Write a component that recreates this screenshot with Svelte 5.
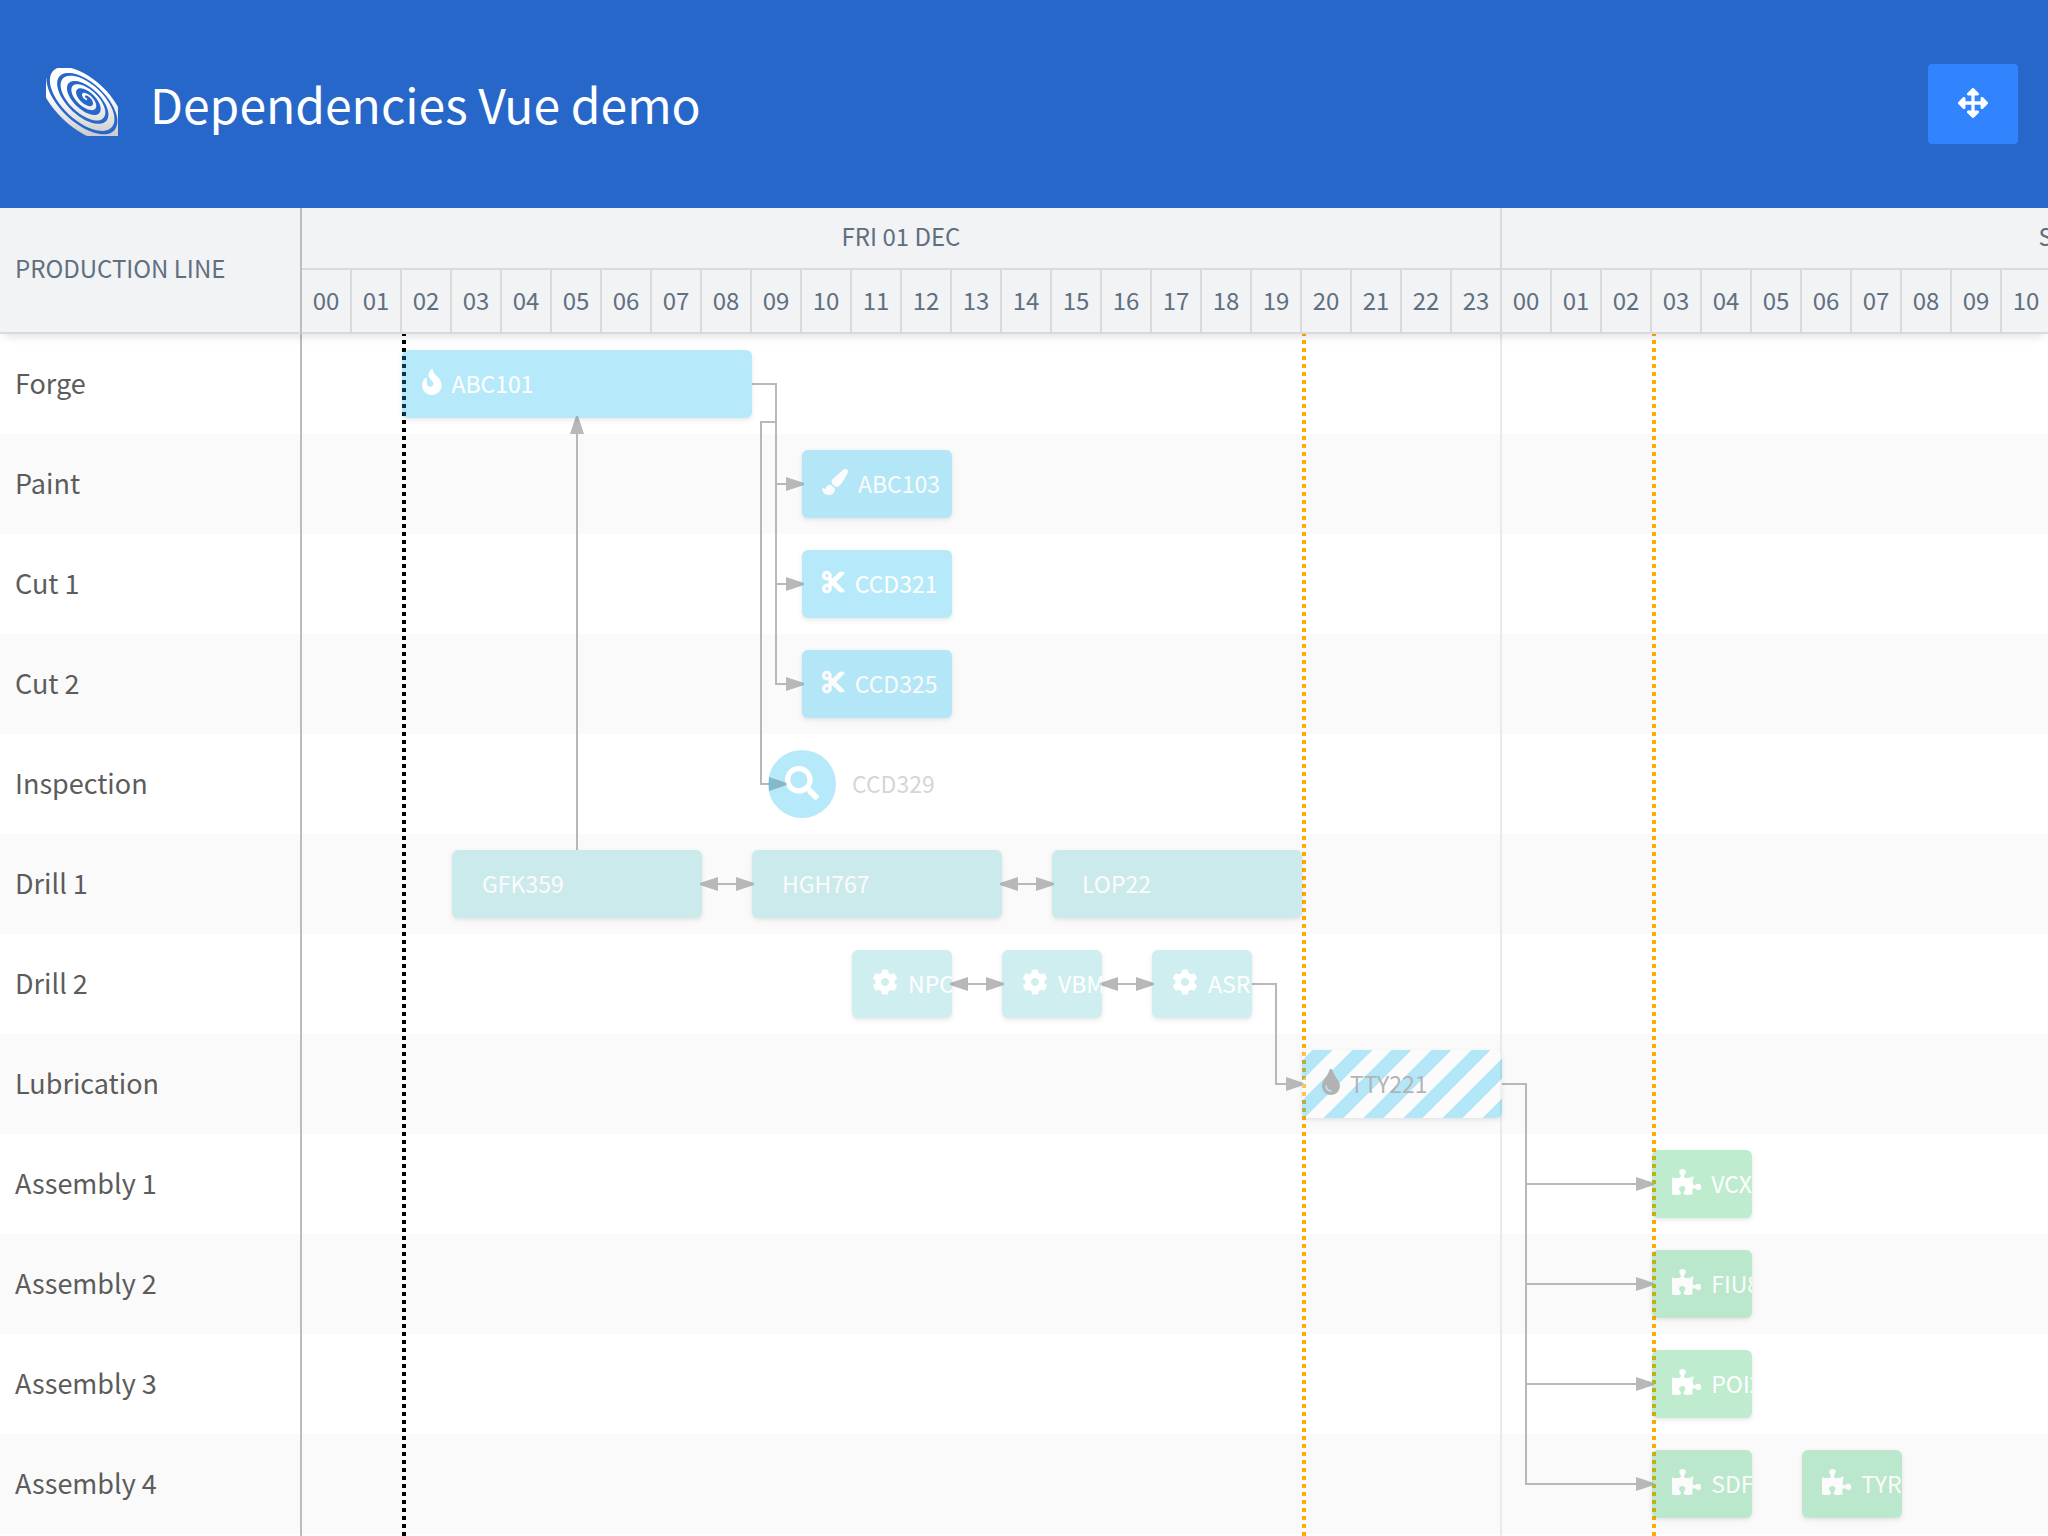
<script>
  const hourWidth = 50;
  const rowHeight = 100;
  const days = ['Fri 01 Dec', 'Sat 02 Dec'];
  const hours = Array.from({ length: 48 }, (_, i) => String(i % 24).padStart(2, '0'));

  const icons = {
    fire: { w: 384, d: 'M216 23.86c0-23.8-30.65-32.77-44.15-13.04C48 191.85 224 200 224 288c0 35.63-29.11 64.46-64.85 63.99-35.17-.45-63.15-29.77-63.15-64.94v-85.51c0-21.7-26.47-32.23-41.43-16.5C27.8 213.16 0 261.33 0 320c0 105.87 86.13 192 192 192s192-86.13 192-192c0-170.29-168-193-168-296.14z' },
    brush: { w: 512, d: 'M167.02 309.34c-40.12 2.58-76.53 17.86-97.19 72.3-2.35 6.21-8 9.98-14.59 9.98-11.11 0-45.46-27.67-55.25-34.35C0 439.62 37.93 512 128 512c75.86 0 128-43.77 128-120.19 0-3.11-.65-6.08-.97-9.13l-88.01-73.34zM457.89 0c-15.16 0-29.37 6.71-40.21 16.45C213.27 199.05 192 203.34 192 257.09c0 13.7 3.25 26.76 8.73 38.7l63.82 53.18c7.21 1.8 14.64 3.03 22.39 3.03 62.11 0 98.11-45.47 211.16-256.46 7.38-14.35 13.9-29.85 13.9-45.99C512 20.64 486 0 457.89 0z' },
    cut: { w: 448, d: 'M278.06 256L444.48 89.57c4.69-4.69 4.69-12.29 0-16.97-32.8-32.8-85.99-32.8-118.79 0L210.18 188.12l-24.86-24.86c4.31-10.92 6.68-22.81 6.68-35.26 0-53.02-42.98-96-96-96S0 74.98 0 128s42.98 96 96 96c4.54 0 8.99-.32 13.36-.93L142.29 256l-32.93 32.93c-4.37-.61-8.83-.93-13.36-.93-53.02 0-96 42.98-96 96s42.98 96 96 96 96-42.98 96-96c0-12.45-2.37-24.34-6.68-35.26l24.86-24.86L325.69 439.4c32.8 32.8 85.99 32.8 118.79 0 4.69-4.68 4.69-12.28 0-16.97L278.06 256zM96 160c-17.64 0-32-14.36-32-32s14.36-32 32-32 32 14.36 32 32-14.36 32-32 32zm0 256c-17.64 0-32-14.36-32-32s14.36-32 32-32 32 14.36 32 32-14.36 32-32 32z' },
    search: { w: 512, d: 'M505 442.7L405.3 343c-4.5-4.5-10.6-7-17-7H372c27.6-35.3 44-79.7 44-128C416 93.1 322.9 0 208 0S0 93.1 0 208s93.1 208 208 208c48.3 0 92.7-16.4 128-44v16.3c0 6.4 2.5 12.5 7 17l99.7 99.7c9.4 9.4 24.6 9.4 33.9 0l28.3-28.3c9.4-9.4 9.4-24.6.1-34zM208 336c-70.7 0-128-57.2-128-128 0-70.7 57.2-128 128-128 70.7 0 128 57.2 128 128 0 70.7-57.2 128-128 128z' },
    cog: { w: 512, d: 'M487.4 315.7l-42.6-24.6c4.3-23.2 4.3-47 0-70.2l42.6-24.6c4.9-2.8 7.1-8.6 5.5-14-11.1-35.6-30-67.8-54.7-94.6-3.8-4.1-10-5.1-14.8-2.3L380.8 110c-17.9-15.4-38.5-27.3-60.8-35.1V25.8c0-5.6-3.9-10.5-9.4-11.7-36.7-8.2-74.3-7.8-109.2 0-5.5 1.2-9.4 6.1-9.4 11.7V75c-22.2 7.9-42.8 19.8-60.8 35.1L88.7 85.5c-4.9-2.8-11-1.9-14.8 2.3-24.7 26.7-43.6 58.9-54.7 94.6-1.7 5.4.6 11.2 5.5 14L67.3 221c-4.3 23.2-4.3 47 0 70.2l-42.6 24.6c-4.9 2.8-7.1 8.6-5.5 14 11.1 35.6 30 67.8 54.7 94.6 3.8 4.1 10 5.1 14.8 2.3l42.6-24.6c17.9 15.4 38.5 27.3 60.8 35.1v49.2c0 5.6 3.9 10.5 9.4 11.7 36.7 8.2 74.3 7.8 109.2 0 5.5-1.2 9.4-6.1 9.4-11.7v-49.2c22.2-7.9 42.8-19.8 60.8-35.1l42.6 24.6c4.9 2.8 11 1.9 14.8-2.3 24.7-26.7 43.6-58.9 54.7-94.6 1.5-5.5-.7-11.3-5.6-14.1zM256 336c-44.1 0-80-35.9-80-80s35.9-80 80-80 80 35.9 80 80-35.9 80-80 80z' },
    tint: { w: 352, d: 'M205.22 22.09c-7.94-28.78-49.44-30.12-58.44 0C100.01 179.85 0 222.72 0 333.91 0 432.35 78.72 512 176 512s176-79.65 176-178.09c0-111.75-99.79-153.34-146.78-311.82zM176 448c-61.75 0-112-50.25-112-112 0-8.84 7.16-16 16-16s16 7.16 16 16c0 44.11 35.89 80 80 80 8.84 0 16 7.16 16 16s-7.16 16-16 16z' },
    puzzle: { w: 576, d: 'M519.442 288.651c-41.519 0-59.5 31.593-82.058 31.593C377.409 320.244 432 144 432 144s-196.288 80-196.288-3.297c0-35.827 36.288-46.25 36.288-85.985C272 19.216 243.885 0 210.539 0c-34.654 0-66.366 18.891-66.366 56.346 0 41.364 31.711 59.277 31.711 81.75C175.885 207.719 0 166.758 0 166.758v333.237s178.635 41.047 178.635-28.662c0-22.473-40-40.107-40-81.471 0-37.456 29.25-56.346 63.577-56.346 33.673 0 61.788 19.216 61.788 54.717 0 39.735-36.288 50.158-36.288 85.985 0 60.803 129.675 25.73 181.23 25.73 0 0-34.725-120.101 25.827-120.101 35.962 0 46.423 36.152 86.308 36.152C556.712 416 576 387.99 576 354.443c0-34.199-18.962-65.792-56.558-65.792z' },
    move: { w: 512, d: 'M352.201 425.775l-79.196 79.196c-9.373 9.373-24.568 9.373-33.941 0l-79.196-79.196c-15.119-15.119-4.411-40.971 16.971-40.97h51.162L228 284H127.196v51.162c0 21.382-25.851 32.09-40.971 16.971L7.029 272.937c-9.373-9.373-9.373-24.569 0-33.941L86.225 159.8c15.119-15.119 40.971-4.411 40.971 16.971V228H228V127.196h-51.23c-21.382 0-32.09-25.851-16.971-40.971l79.196-79.196c9.373-9.373 24.568-9.373 33.941 0l79.196 79.196c15.119 15.119 4.411 40.971-16.971 40.971h-51.162V228h100.804v-51.162c0-21.382 25.851-32.09 40.97-16.971l79.196 79.196c9.373 9.373 9.373 24.569 0 33.941L425.773 352.2c-15.119 15.119-40.971 4.411-40.97-16.971V284H284v100.804h51.23c21.382 0 32.09 25.851 16.971 40.971z' }
  };

  const rows = [
    { name: 'Forge', events: [{ start: 2, span: 7, label: 'ABC101', icon: 'fire', tone: 'sky' }] },
    { name: 'Paint', events: [{ start: 10, span: 3, label: 'ABC103', icon: 'brush', tone: 'sky' }] },
    { name: 'Cut 1', events: [{ start: 10, span: 3, label: 'CCD321', icon: 'cut', tone: 'sky' }] },
    { name: 'Cut 2', events: [{ start: 10, span: 3, label: 'CCD325', icon: 'cut', tone: 'sky' }] },
    { name: 'Inspection', events: [{ start: 10, span: 4, label: 'CCD329', icon: 'search', tone: 'milestone' }] },
    { name: 'Drill 1', events: [
      { start: 3, span: 5, label: 'GFK359', tone: 'teal' },
      { start: 9, span: 5, label: 'HGH767', tone: 'teal' },
      { start: 15, span: 5, label: 'LOP22', tone: 'teal' }
    ] },
    { name: 'Drill 2', events: [
      { start: 11, span: 2, label: 'NPC883', icon: 'cog', tone: 'teal' },
      { start: 14, span: 2, label: 'VBM990', icon: 'cog', tone: 'teal' },
      { start: 17, span: 2, label: 'ASR', icon: 'cog', tone: 'teal' }
    ] },
    { name: 'Lubrication', events: [{ start: 20, span: 4, label: 'TTY221', icon: 'tint', tone: 'striped' }] },
    { name: 'Assembly 1', events: [{ start: 27, span: 2, label: 'VCX', icon: 'puzzle', tone: 'green' }] },
    { name: 'Assembly 2', events: [{ start: 27, span: 2, label: 'FIU88', icon: 'puzzle', tone: 'green' }] },
    { name: 'Assembly 3', events: [{ start: 27, span: 2, label: 'POI22', icon: 'puzzle', tone: 'green' }] },
    { name: 'Assembly 4', events: [
      { start: 27, span: 2, label: 'SDF', icon: 'puzzle', tone: 'green' },
      { start: 30, span: 2, label: 'TYR', icon: 'puzzle', tone: 'green' }
    ] }
  ];

  const markers = [
    { hour: 2, tone: 'now' },
    { hour: 20, tone: 'shift' },
    { hour: 27, tone: 'shift' }
  ];

  const links = [
    'M450 50H474V350H486', 'M474 150H486', 'M474 250H486',
    'M474 88H459V450H469',
    'M275 516V98',
    'M410 550H440', 'M710 550H740',
    'M660 650H690', 'M810 650H840',
    'M950 650H974V750H986',
    'M1200 750H1224V1150H1336', 'M1224 850H1336', 'M1224 950H1336', 'M1224 1050H1336'
  ];

  const heads = [
    { x: 502, y: 150, a: 0 }, { x: 502, y: 250, a: 0 }, { x: 502, y: 350, a: 0 },
    { x: 485, y: 450, a: 0 }, { x: 275, y: 82, a: -90 },
    { x: 398, y: 550, a: 180 }, { x: 452, y: 550, a: 0 },
    { x: 698, y: 550, a: 180 }, { x: 752, y: 550, a: 0 },
    { x: 648, y: 650, a: 180 }, { x: 702, y: 650, a: 0 },
    { x: 798, y: 650, a: 180 }, { x: 852, y: 650, a: 0 },
    { x: 1002, y: 750, a: 0 },
    { x: 1352, y: 850, a: 0 }, { x: 1352, y: 950, a: 0 }, { x: 1352, y: 1050, a: 0 }, { x: 1352, y: 1150, a: 0 }
  ];

  // Tilted elliptical spiral of the logo, widening clockwise from its eye
  // and drifting towards the lower left as it grows.
  function spiral() {
    const tilt = (43 * Math.PI) / 180;
    const ux = Math.cos(tilt);
    const uy = Math.sin(tilt);
    const point = (turn, r) => {
      const a = Math.PI + turn * 2 * Math.PI;
      const p = r * Math.cos(a);
      const q = 0.5 * r * Math.sin(a) + 0.1 * r;
      return `${(124 + p * ux - q * uy).toFixed(1)} ${(91 + p * uy + q * ux).toFixed(1)}`;
    };
    const outer = [];
    const inner = [];
    for (let t = -3.3; t <= 0.95; t += 0.02) {
      const r = 131 + 37 * t;
      outer.push(point(t, r));
      inner.unshift(point(t, Math.max(1, r - Math.min(25, 8 + r * 0.15))));
    }
    return `M${outer.join('L')}L${inner.join('L')}Z`;
  }
  const logo = spiral();
</script>

{#snippet glyph(name)}
  <svg class="icon" viewBox="0 0 {icons[name].w} 512" aria-hidden="true"><path d={icons[name].d} /></svg>
{/snippet}

<div class="app">
  <header class="topbar">
    <svg class="logo" viewBox="0 0 216 204" aria-hidden="true">
      <defs>
        <linearGradient id="shine" gradientUnits="userSpaceOnUse" x1="0" y1="0" x2="0" y2="204">
          <stop offset="0.4" stop-color="#fff" />
          <stop offset="1" stop-color="#ccc" />
        </linearGradient>
      </defs>
      <path d={logo} fill="url(#shine)" />
    </svg>
    <h1>Dependencies Vue demo</h1>
    <button class="fullscreen" type="button" aria-label="Full screen">{@render glyph('move')}</button>
  </header>

  <main class="scheduler">
    <div class="head">
      <div class="corner">Production line</div>
      <div class="axis">
        <div class="days">
          {#each days as day}<div class="day">{day}</div>{/each}
        </div>
        <div class="hours">
          {#each hours as hour}<div class="hour">{hour}</div>{/each}
        </div>
      </div>
    </div>

    <div class="body">
      <div class="names">
        {#each rows as row}<div class="name">{row.name}</div>{/each}
      </div>
      <div class="canvas">
        {#each rows as row}
          <div class="lane">
            {#each row.events as ev}
              <div class="event {ev.tone}" style="grid-column: {ev.start + 1} / span {ev.span}">
                {#if ev.icon}<span class="badge">{@render glyph(ev.icon)}</span>{/if}
                <span class="label">{ev.label}</span>
              </div>
            {/each}
          </div>
        {/each}
        <div class="dayline"></div>
        {#each markers as m}
          <div class="marker {m.tone}" style="left: {m.hour * hourWidth}px"></div>
        {/each}
        <svg class="links" width={48 * hourWidth} height={rows.length * rowHeight} aria-hidden="true">
          {#each links as d}<path {d} />{/each}
          {#each heads as h}
            <polygon points="0,-1 0,1 -18,7 -18,-7" transform="translate({h.x} {h.y}) rotate({h.a})" />
          {/each}
        </svg>
      </div>
    </div>
  </main>
</div>

<style>
  :global(body) {
    margin: 0;
    background: #fff;
    font-family: 'Noto Sans CJK JP', 'Noto Sans', sans-serif;
  }
  .app {
    display: flex;
    flex-direction: column;
    min-height: 100vh;
    overflow: hidden;
  }
  .topbar {
    display: flex;
    align-items: center;
    height: 208px;
    padding: 0 30px 0 46px;
    background: #2667c9;
    color: #fff;
  }
  .logo {
    width: 72px;
    height: 68px;
    margin: 0 32px 4px 0;
    overflow: hidden;
  }
  h1 {
    flex: 1;
    margin: 0 0 2px;
    font-size: 48px;
    font-weight: 400;
    line-height: 72px;
  }
  .fullscreen {
    display: flex;
    align-items: center;
    justify-content: center;
    width: 90px;
    height: 80px;
    padding: 0 0 2px;
    border: 0;
    border-radius: 4px;
    background: #3183fe;
    color: #fff;
  }
  .icon {
    display: block;
    height: 26px;
    fill: currentColor;
  }
  .fullscreen .icon {
    height: 30px;
  }
  .scheduler {
    display: flex;
    flex: 1;
    flex-direction: column;
  }
  .head {
    position: relative;
    z-index: 1;
    display: flex;
    background: #f2f3f5;
    box-shadow: 0 6px 10px -4px rgba(0, 0, 0, 0.13);
    color: #606f80;
    font-size: 24px;
    line-height: 36px;
    text-transform: uppercase;
  }
  .corner {
    display: flex;
    flex: none;
    align-items: center;
    box-sizing: border-box;
    width: 302px;
    padding: 0 0 4px 15px;
    border-right: 2px solid #bcbdbe;
    border-bottom: 2px solid #d8dadc;
  }
  .axis {
    flex: 1;
    min-width: 0;
    overflow: hidden;
  }
  .days,
  .hours {
    display: flex;
  }
  .day,
  .hour {
    flex: none;
    box-sizing: border-box;
    border-right: 2px solid #d8dadc;
    border-bottom: 2px solid #d8dadc;
    text-align: center;
  }
  .day {
    width: 1200px;
    padding: 10px 0 14px;
  }
  .hour {
    width: 50px;
    padding: 12px 0 14px;
  }
  .body {
    display: flex;
    flex: 1;
  }
  .names {
    flex: none;
    box-sizing: border-box;
    width: 302px;
    border-right: 2px solid #bcbcbc;
  }
  .name {
    height: 100px;
    padding-left: 15px;
    color: #5c5c5c;
    font-size: 27px;
    line-height: 98px;
  }
  .canvas {
    position: relative;
    flex: 1;
    min-width: 0;
    overflow: hidden;
    isolation: isolate;
  }
  .lane {
    display: grid;
    grid-template-columns: repeat(48, 50px);
    align-items: center;
    height: 100px;
  }
  .name:nth-child(even),
  .lane:nth-child(even) {
    background: #fafafa;
  }
  .event {
    z-index: 3;
    display: flex;
    grid-row: 1;
    gap: 10px;
    align-items: center;
    box-sizing: border-box;
    height: 68px;
    padding-left: 20px;
    overflow: hidden;
    border-radius: 6px;
    box-shadow: 0 2px 4px rgba(0, 0, 0, 0.3);
    color: #fff;
    font-size: 23px;
    line-height: 36px;
    opacity: 0.3;
    white-space: nowrap;
  }
  .badge {
    flex: none;
    padding-bottom: 4px;
  }
  .label {
    padding-bottom: 2px;
  }
  .label:only-child {
    padding-left: 10px;
  }
  .sky {
    background: #12bcf2;
  }
  .teal {
    background: #63c8cb;
  }
  .green {
    background: #2ec064;
  }
  .striped {
    background: repeating-linear-gradient(-45deg, #12bcf2 0 14px, #fff 14px 28px);
    color: #101010;
  }
  .milestone {
    gap: 16px;
    margin-left: -34px;
    padding: 0;
    border-radius: 0;
    box-shadow: none;
    color: #777;
  }
  .milestone .badge {
    display: flex;
    align-items: center;
    justify-content: center;
    box-sizing: border-box;
    width: 68px;
    height: 68px;
    padding-bottom: 2px;
    border-radius: 50%;
    background: #12bcf2;
    color: #fff;
  }
  .milestone .icon {
    height: 34px;
  }
  .dayline {
    position: absolute;
    top: 0;
    bottom: 0;
    left: 1198px;
    width: 2px;
    background: #e8eaeb;
  }
  .marker {
    position: absolute;
    top: 0;
    bottom: 0;
    z-index: 1;
    width: 4px;
    background: linear-gradient(transparent 50%, currentColor 50%) 0 2px / 4px 8px;
  }
  .now {
    color: #000;
  }
  .shift {
    color: #ffab00;
  }
  .links {
    position: absolute;
    top: 0;
    left: 0;
    z-index: 2;
    fill: #b8b8b8;
  }
  .links path {
    fill: none;
    stroke: #b8b8b8;
    stroke-width: 2px;
  }
</style>
